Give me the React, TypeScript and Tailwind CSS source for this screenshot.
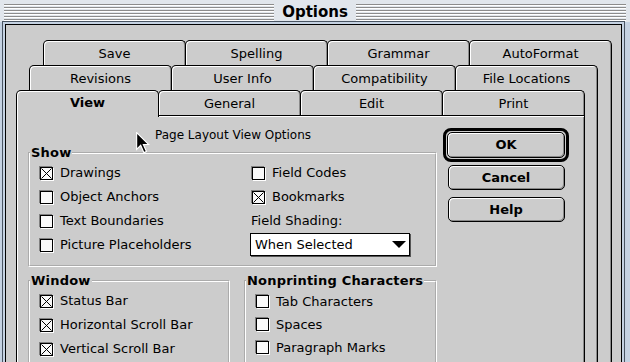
import React from 'react';

const ROW1 = ['Save', 'Spelling', 'Grammar', 'AutoFormat'];
const ROW2 = ['Revisions', 'User Info', 'Compatibility', 'File Locations'];
const ROW3 = ['View', 'General', 'Edit', 'Print'];

function Stripes() {
  return (
    <div className="flex-1 flex flex-col gap-[1px]">
      {Array.from({ length: 6 }).map((_, i) => (
        <div key={i} className="h-[2px] border-t border-[#8c8c8c] bg-white" />
      ))}
    </div>
  );
}

function Tab({ label, first, selected }: { label: string; first?: boolean; selected?: boolean }) {
  return (
    <div
      className={
        'w-[143px] shrink-0 rounded-t-[5px] border border-b-0 border-black bg-[#cccccc] flex items-center justify-center text-[13px] text-black ' +
        (first ? '' : '-ml-px ') +
        (selected
          ? 'h-[27px] -mb-[2px] relative z-10 font-bold pb-[2px] shadow-[inset_1px_1px_0_#fff]'
          : 'h-[25px] pt-[1px] shadow-[inset_1px_1px_0_#fff,inset_-1px_0_0_#8a8a8a]')
      }
    >
      {label}
    </div>
  );
}

function TabRow({ labels, selectFirst }: { labels: string[]; selectFirst?: boolean }) {
  return (
    <div className="flex items-end">
      {labels.map((l, i) => (
        <Tab key={l} label={l} first={i === 0} selected={selectFirst && i === 0} />
      ))}
    </div>
  );
}

function Check({ checked }: { checked?: boolean }) {
  return (
    <span className="w-[13px] h-[13px] shrink-0 border border-black bg-[#fafafa] shadow-[-1px_-1px_0_#808080,1px_1px_0_#fff] flex items-center justify-center">
      {checked && (
        <svg width="11" height="11" viewBox="0 0 11 11">
          <path d="M0.5 0.5L10.5 10.5M10.5 0.5L0.5 10.5" stroke="black" strokeWidth="1" fill="none" />
        </svg>
      )}
    </span>
  );
}

function CheckRow({ label, checked, h = 'h-[24px]' }: { label: string; checked?: boolean; h?: string }) {
  return (
    <div className={'flex items-center gap-[7px] text-[13px] whitespace-nowrap ' + h}>
      <Check checked={checked} />
      <span>{label}</span>
    </div>
  );
}

function Group({ title, className, children }: { title: string; className: string; children: React.ReactNode }) {
  return (
    <fieldset className={'shrink-0 border-2 border-white [border-style:groove] ' + className}>
      <legend className="pl-[1px] pr-[1px] text-[13px] font-bold leading-[15px] tracking-[0.2px]">{title}</legend>
      {children}
    </fieldset>
  );
}

function Button({ label, className = '' }: { label: string; className?: string }) {
  return (
    <div
      className={
        'rounded-[5px] border border-black bg-[#cccccc] shadow-[inset_1px_1px_0_#fff,inset_-1px_-1px_0_#888] flex items-center justify-center font-bold text-[13px] ' +
        className
      }
    >
      {label}
    </div>
  );
}

export default function App() {
  return (
    <div className="w-[630px] h-[362px] overflow-hidden bg-[#c5d2e2] flex flex-col font-['DejaVu_Sans',sans-serif] text-black">
      {/* title bar */}
      <div className="h-[22px] shrink-0 flex items-start pt-[4px] px-[4px] bg-[#e1e6ec]">
        <Stripes />
        <div className="px-[8px] -mt-[1px] text-[15px] font-bold leading-[18px]">Options</div>
        <Stripes />
      </div>

      <div className="ml-[5px] mr-[8px] mt-[2px] h-[400px] shrink-0 border border-black bg-[#cccccc] shadow-[0_0_0_2px_#c5d2e2,0_0_0_3px_#4a5563] overflow-hidden pt-[15px]">
        <div className="ml-[37px] w-[569px]">
          <TabRow labels={ROW1} />
          <div className="-ml-[14px] w-[583px] h-[320px] border-r border-black shadow-[inset_-1px_0_0_#8a8a8a]">
            <TabRow labels={ROW2} />
            <div className="-ml-[13px] w-[582px] h-[300px] border-r border-black shadow-[inset_-1px_0_0_#8a8a8a]">
              <TabRow labels={ROW3} selectFirst />
              <div className="relative w-[569px] h-[270px] border border-b-0 border-black bg-[#cccccc] shadow-[inset_1px_1px_0_#fff,inset_-1px_0_0_#8a8a8a] flex pl-[11px]">
                {/* cursor */}
                <svg className="absolute left-[119px] top-[16px]" width="14" height="22" viewBox="0 0 12 19">
                  <path d="M0.5 0.5 L0.5 15 L4 11.5 L6.8 17.8 L9 16.8 L6.3 10.8 L11 10.8 Z" fill="black" stroke="white" strokeWidth="1" />
                </svg>

                <div className="w-[409px] shrink-0 flex flex-col">
                  <div className="shrink-0 pl-[127px] pt-[11px] text-[12px] leading-[16px]">Page Layout View Options</div>

                  <Group title="Show" className="mt-[2px] h-[122px]">
                    <div className="flex pt-[1px]">
                      <div className="w-[220px] pl-[10px]">
                        <CheckRow label="Drawings" checked />
                        <CheckRow label="Object Anchors" />
                        <CheckRow label="Text Boundaries" />
                        <CheckRow label="Picture Placeholders" />
                      </div>
                      <div>
                        <div className="pl-[2px]">
                          <CheckRow label="Field Codes" />
                          <CheckRow label="Bookmarks" checked />
                        </div>
                        <div className="h-[24px] flex items-center pl-[1px] text-[13px]">Field Shading:</div>
                        <div className="w-[160px] h-[23px] border border-black bg-white shadow-[1px_1px_0_#555] flex items-center justify-between pl-[4px] pr-[3px] text-[13px]">
                          <span>When Selected</span>
                          <svg width="14" height="7" viewBox="0 0 14 7">
                            <path d="M0 0 L14 0 L7 7 Z" fill="black" />
                          </svg>
                        </div>
                      </div>
                    </div>
                  </Group>

                  <div className="shrink-0 flex gap-[14px] mt-[6px]">
                    <Group title="Window" className="w-[202px] h-[120px]">
                      <div className="pl-[10px] pt-[1px]">
                        <CheckRow label="Status Bar" checked />
                        <CheckRow label="Horizontal Scroll Bar" checked />
                        <CheckRow label="Vertical Scroll Bar" checked />
                      </div>
                    </Group>
                    <Group title="Nonprinting Characters" className="w-[193px] h-[120px]">
                      <div className="pl-[10px] pt-[2px]">
                        <CheckRow label="Tab Characters" h="h-[23px]" />
                        <CheckRow label="Spaces" h="h-[23px]" />
                        <CheckRow label="Paragraph Marks" h="h-[23px]" />
                      </div>
                    </Group>
                  </div>
                </div>

                <div className="w-[126px] ml-[6px] pt-[12px] flex flex-col items-center">
                  <div className="w-[126px] h-[34px] rounded-[8px] border-[3px] border-black p-[1px]">
                    <Button label="OK" className="h-full" />
                  </div>
                  <Button label="Cancel" className="mt-[3px] w-[117px] h-[25px]" />
                  <Button label="Help" className="mt-[7px] w-[117px] h-[25px]" />
                </div>
              </div>
            </div>
          </div>
        </div>
      </div>
    </div>
  );
}
